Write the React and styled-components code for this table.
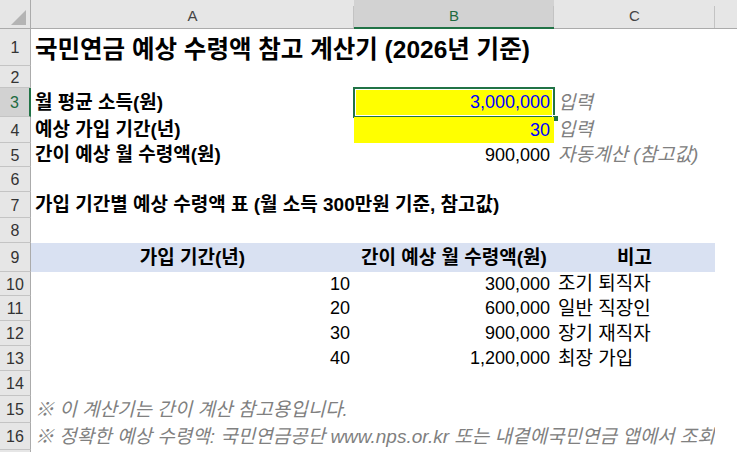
import React from 'react';
import styled, { createGlobalStyle } from 'styled-components';

const Global = createGlobalStyle`
  html, body { margin: 0; padding: 0; background: #fff; overflow: hidden; }
  body { font-family: "Liberation Sans", "Noto Sans CJK KR", sans-serif; }
`;

const COLS = '31px 323px 200px 161px 1fr';
const GREEN = '#217346';

const Sheet = styled.div`
  width: 737px;
  height: 452px;
  overflow: hidden;
  display: flex;
  flex-direction: column;
`;

const HeaderBar = styled.div`
  display: grid;
  grid-template-columns: ${COLS};
  height: 29px;
  flex: none;
`;

const Corner = styled.div`
  background: #e6e6e6;
  border-right: 1px solid #ababab;
  border-bottom: 1px solid #ababab;
  box-sizing: border-box;
  display: flex;
  align-items: flex-end;
  justify-content: flex-end;
  padding: 0 4px 3px 0;
`;

const ColHead = styled.div`
  box-sizing: border-box;
  display: flex;
  align-items: center;
  justify-content: center;
  padding-top: 3px;
  font-size: 15px;
  color: ${p => (p.$selected ? '#1e6b41' : '#444')};
  background: ${p => (p.$last ? '' : 'linear-gradient(#c3c3c3, #c3c3c3) right 6px / 1px calc(100% - 6px) no-repeat,')}
    ${p => (p.$selected ? '#d2d2d2' : '#e6e6e6')};
  border-bottom: ${p => (p.$selected ? `2px solid ${GREEN}` : '1px solid #ababab')};
`;

const Row = styled.div`
  display: grid;
  grid-template-columns: ${COLS};
  height: ${p => p.$h}px;
  flex: none;
`;

const RowHead = styled.div`
  box-sizing: border-box;
  display: flex;
  align-items: center;
  justify-content: center;
  font-size: 16px;
  padding-top: 2px;
  color: ${p => (p.$selected ? '#1e6b41' : '#333')};
  background: ${p => (p.$selected ? '#d2d2d2' : '#e6e6e6')};
  border-right: ${p => (p.$selected ? `2px solid ${GREEN}` : '1px solid #ababab')};
  border-bottom: 1px solid #c4c4c4;
`;

const Cell = styled.div`
  position: relative;
  display: flex;
  align-items: center;
  justify-content: ${p => (p.$align === 'right' ? 'flex-end' : p.$align === 'center' ? 'center' : 'flex-start')};
  padding: ${p => p.$pt ?? 1}px 4px 0 4px;
  min-width: 0;
  white-space: nowrap;
  overflow: ${p => (p.$clip ? 'hidden' : 'visible')};
  grid-column: ${p => (p.$span ? `span ${p.$span}` : 'auto')};
  font-size: ${p => p.$size || 19}px;
  line-height: 1.2;
  font-weight: ${p => (p.$bold ? 700 : 400)};
  font-style: ${p => (p.$italic ? 'italic' : 'normal')};
  color: ${p => p.$color || '#000'};
  background: ${p => p.$bg || 'transparent'};
`;

const Selection = styled.div`
  position: absolute;
  left: -1px;
  top: -1px;
  right: -1px;
  bottom: -1px;
  box-shadow: inset 0 0 0 2px ${GREEN}, inset 0 0 0 3px #fff;
  pointer-events: none;
`;

const FillHandle = styled.div`
  position: absolute;
  right: -4px;
  bottom: -4px;
  width: 5px;
  height: 5px;
  background: ${GREEN};
  border: 1px solid #fff;
`;

const GRAY = '#808080';
const BLUE = '#0000ff';
const YELLOW = '#ffff00';
const BAND = '#d9e1f2';
const NUM = 18;

const Empty = () => (
  <>
    <Cell />
    <Cell />
    <Cell />
    <Cell />
  </>
);

export default function App() {
  return (
    <>
      <Global />
      <Sheet>
        <HeaderBar>
          <Corner>
            <svg width="15" height="15" viewBox="0 0 15 15">
              <polygon points="15,0 15,15 0,15" fill="#b4b4b4" />
            </svg>
          </Corner>
          <ColHead>A</ColHead>
          <ColHead $selected>B</ColHead>
          <ColHead>C</ColHead>
          <ColHead $last />
        </HeaderBar>

        <Row $h={37}>
          <RowHead>1</RowHead>
          <Cell $bold $size={24.5} $pt={4}>국민연금 예상 수령액 참고 계산기 (2026년 기준)</Cell>
          <Cell /><Cell /><Cell />
        </Row>
        <Row $h={22}>
          <RowHead>2</RowHead>
          <Empty />
        </Row>
        <Row $h={29}>
          <RowHead $selected>3</RowHead>
          <Cell $bold>월 평균 소득(원)</Cell>
          <Cell $align="right" $size={NUM} $color={BLUE} $bg={YELLOW}>
            3,000,000
            <Selection>
              <FillHandle />
            </Selection>
          </Cell>
          <Cell $italic $color={GRAY}>입력</Cell>
          <Cell />
        </Row>
        <Row $h={26}>
          <RowHead>4</RowHead>
          <Cell $bold>예상 가입 기간(년)</Cell>
          <Cell $align="right" $size={NUM} $color={BLUE} $bg={YELLOW}>30</Cell>
          <Cell $italic $color={GRAY}>입력</Cell>
          <Cell />
        </Row>
        <Row $h={24}>
          <RowHead>5</RowHead>
          <Cell $bold>간이 예상 월 수령액(원)</Cell>
          <Cell $align="right" $size={NUM}>900,000</Cell>
          <Cell $italic $color={GRAY}>자동계산 (참고값)</Cell>
          <Cell />
        </Row>
        <Row $h={25}>
          <RowHead>6</RowHead>
          <Empty />
        </Row>
        <Row $h={26}>
          <RowHead>7</RowHead>
          <Cell $bold>가입 기간별 예상 수령액 표 (월 소득 300만원 기준, 참고값)</Cell>
          <Cell /><Cell /><Cell />
        </Row>
        <Row $h={25}>
          <RowHead>8</RowHead>
          <Empty />
        </Row>
        <Row $h={29}>
          <RowHead>9</RowHead>
          <Cell $bold $align="center" $bg={BAND}>가입 기간(년)</Cell>
          <Cell $bold $align="center" $bg={BAND}>간이 예상 월 수령액(원)</Cell>
          <Cell $bold $align="center" $bg={BAND}>비고</Cell>
          <Cell />
        </Row>
        {[
          [24, 10, '10', '300,000', '조기 퇴직자'],
          [25, 11, '20', '600,000', '일반 직장인'],
          [25, 12, '30', '900,000', '장기 재직자'],
          [25, 13, '40', '1,200,000', '최장 가입'],
        ].map(([h, n, y, amt, note]) => (
          <Row $h={h} key={n}>
            <RowHead>{n}</RowHead>
            <Cell $align="right" $size={NUM}>{y}</Cell>
            <Cell $align="right" $size={NUM}>{amt}</Cell>
            <Cell>{note}</Cell>
            <Cell />
          </Row>
        ))}
        <Row $h={25}>
          <RowHead>14</RowHead>
          <Empty />
        </Row>
        <Row $h={27}>
          <RowHead>15</RowHead>
          <Cell $italic $color={GRAY}>※ 이 계산기는 간이 계산 참고용입니다.</Cell>
          <Cell /><Cell /><Cell />
        </Row>
        <Row $h={27}>
          <RowHead>16</RowHead>
          <Cell $italic $color={GRAY} $span={3} $clip>
            ※ 정확한 예상 수령액: 국민연금공단 www.nps.or.kr 또는 내곁에국민연금 앱에서 조회
          </Cell>
          <Cell />
        </Row>
        <Row $h={27}>
          <RowHead />
          <Empty />
        </Row>
      </Sheet>
    </>
  );
}
